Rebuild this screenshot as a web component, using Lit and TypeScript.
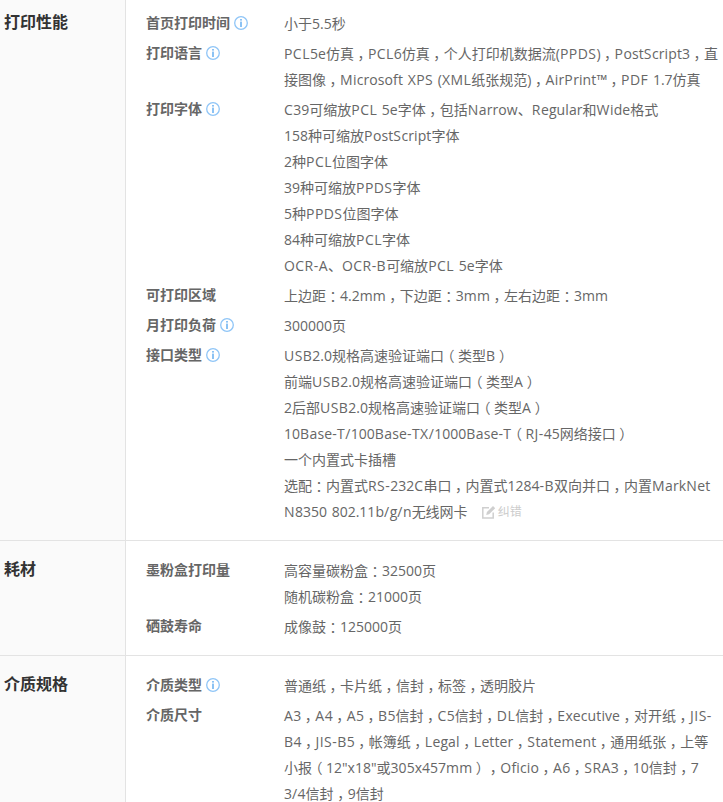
import { LitElement, html, css, svg } from "lit";
import { customElement } from "lit/decorators.js";

type Row = { label: string; info?: boolean; lines: string[]; fix?: boolean };
type Section = { title: string; rows: Row[] };

const sections: Section[] = [
  {
    title: "打印性能",
    rows: [
      { label: "首页打印时间", info: true, lines: ["小于5.5秒"] },
      { label: "打印语言", info: true, lines: ["PCL5e仿真，PCL6仿真，个人打印机数据流(PPDS)，PostScript3，直接图像，Microsoft XPS (XML纸张规范)，AirPrint™，PDF 1.7仿真"] },
      { label: "打印字体", info: true, lines: ["C39可缩放PCL 5e字体，包括Narrow、Regular和Wide格式", "158种可缩放PostScript字体", "2种PCL位图字体", "39种可缩放PPDS字体", "5种PPDS位图字体", "84种可缩放PCL字体", "OCR-A、OCR-B可缩放PCL 5e字体"] },
      { label: "可打印区域", lines: ["上边距：4.2mm，下边距：3mm，左右边距：3mm"] },
      { label: "月打印负荷", info: true, lines: ["300000页"] },
      { label: "接口类型", info: true, fix: true, lines: ["USB2.0规格高速验证端口（类型B）", "前端USB2.0规格高速验证端口（类型A）", "2后部USB2.0规格高速验证端口（类型A）", "10Base-T/100Base-TX/1000Base-T（RJ-45网络接口）", "一个内置式卡插槽", "选配：内置式RS-232C串口，内置式1284-B双向并口，内置MarkNet N8350 802.11b/g/n无线网卡"] },
    ],
  },
  {
    title: "耗材",
    rows: [
      { label: "墨粉盒打印量", lines: ["高容量碳粉盒：32500页", "随机碳粉盒：21000页"] },
      { label: "硒鼓寿命", lines: ["成像鼓：125000页"] },
    ],
  },
  {
    title: "介质规格",
    rows: [
      { label: "介质类型", info: true, lines: ["普通纸，卡片纸，信封，标签，透明胶片"] },
      { label: "介质尺寸", lines: ["A3，A4，A5，B5信封，C5信封，DL信封，Executive，对开纸，JIS-B4，JIS-B5，帐簿纸，Legal，Letter，Statement，通用纸张，上等小报（12\"x18\"或305x457mm），Oficio，A6，SRA3，10信封，7 3/4信封，9信封"] },
    ],
  },
];

const infoIcon = svg`<svg class="info" width="14" height="14" viewBox="0 0 14 14" aria-hidden="true"><circle cx="7" cy="7" r="6.3" fill="none" stroke="#8fc5f7" stroke-width="1.3"/><rect x="6.2" y="3" width="1.6" height="1.6" fill="#6fb3f2"/><rect x="6.2" y="5.6" width="1.6" height="5.4" fill="#6fb3f2"/></svg>`;

const editIcon = svg`<svg class="edit" width="14" height="14" viewBox="0 0 14 14" aria-hidden="true"><path d="M11.2 7.5V13H.8V2.8H7" fill="none" stroke="#cfcfcf" stroke-width="1.5"/><path d="M4.2 10l.7-2.9L11 1l2.2 2.2-6.1 6.1z" fill="#cfcfcf"/></svg>`;

const fmt = (t: string) =>
  t
    .split(/([，：（）]|[A-Z\-\/]+|[a-z]+| )/)
    .filter((p) => p !== "")
    .map((p) => {
      if (/^[，：（）]$/.test(p)) return html`<span class="punct">${p}</span>`;
      if (/^[A-Z\-\/]+$/.test(p)) return html`<span class="cap">${p}</span>`;
      if (/^[a-z]+$/.test(p)) return html`<span class="low">${p}</span>`;
      return html`<span>${p}</span>`;
    });

@customElement("app-root")
export class AppRoot extends LitElement {
  static styles = css`
    :host {
      display: block;
      height: 802px;
      overflow: hidden;
      background: #fff;
      font-family: "Open Sans", "Noto Sans CJK SC", sans-serif;
      font-size: 14px;
      line-height: 26px;
      color: #666;
    }
    .section {
      display: grid;
      grid-template-columns: 126px 1fr;
      border-bottom: 1px solid #e3e3e3;
    }
    .title {
      background: #fafafa;
      border-right: 1px solid #e3e3e3;
      padding: 17px 0 0 4px;
      font-size: 16px;
      font-weight: 700;
      color: #333;
      line-height: 23px;
    }
    .section:first-child .title { padding-top: 11px; }
    .body {
      padding: 17px 3px 15px 20px;
      display: flex;
      flex-direction: column;
      gap: 4px;
    }
    .section:first-child .body { padding-top: 11px; }
    .row {
      display: grid;
      grid-template-columns: 138px 1fr;
    }
    .label {
      font-weight: 700;
      line-height: 24px;
      display: flex;
      align-items: center;
      gap: 4px;
      align-self: start;
    }
    .info { flex: none; }
    .line { display: block; word-spacing: 1px; }
    .punct {
      font-feature-settings: "halt";
      padding: 0 3.5px;
    }
    .cap { letter-spacing: 0.45px; }
    .low { letter-spacing: 0.1px; }
    .fix {
      margin-left: 14px;
      font-size: 12px;
      color: #ccc;
      white-space: nowrap;
      display: inline-flex;
      align-items: center;
      gap: 2px;
      vertical-align: top;
    }
  `;

  render() {
    return sections.map(
      (s) => html`<div class="section">
        <div class="title">${s.title}</div>
        <div class="body">
          ${s.rows.map(
            (r) => html`<div class="row">
              <div class="label">${r.label}${r.info ? infoIcon : ""}</div>
              <div class="value">
                ${r.lines.map(
                  (l, i) => html`<span class="line">${fmt(l)}${r.fix && i === r.lines.length - 1
                    ? html`<span class="fix">${editIcon}<span>纠错</span></span>`
                    : ""}</span>`
                )}
              </div>
            </div>`
          )}
        </div>
      </div>`
    );
  }
}
